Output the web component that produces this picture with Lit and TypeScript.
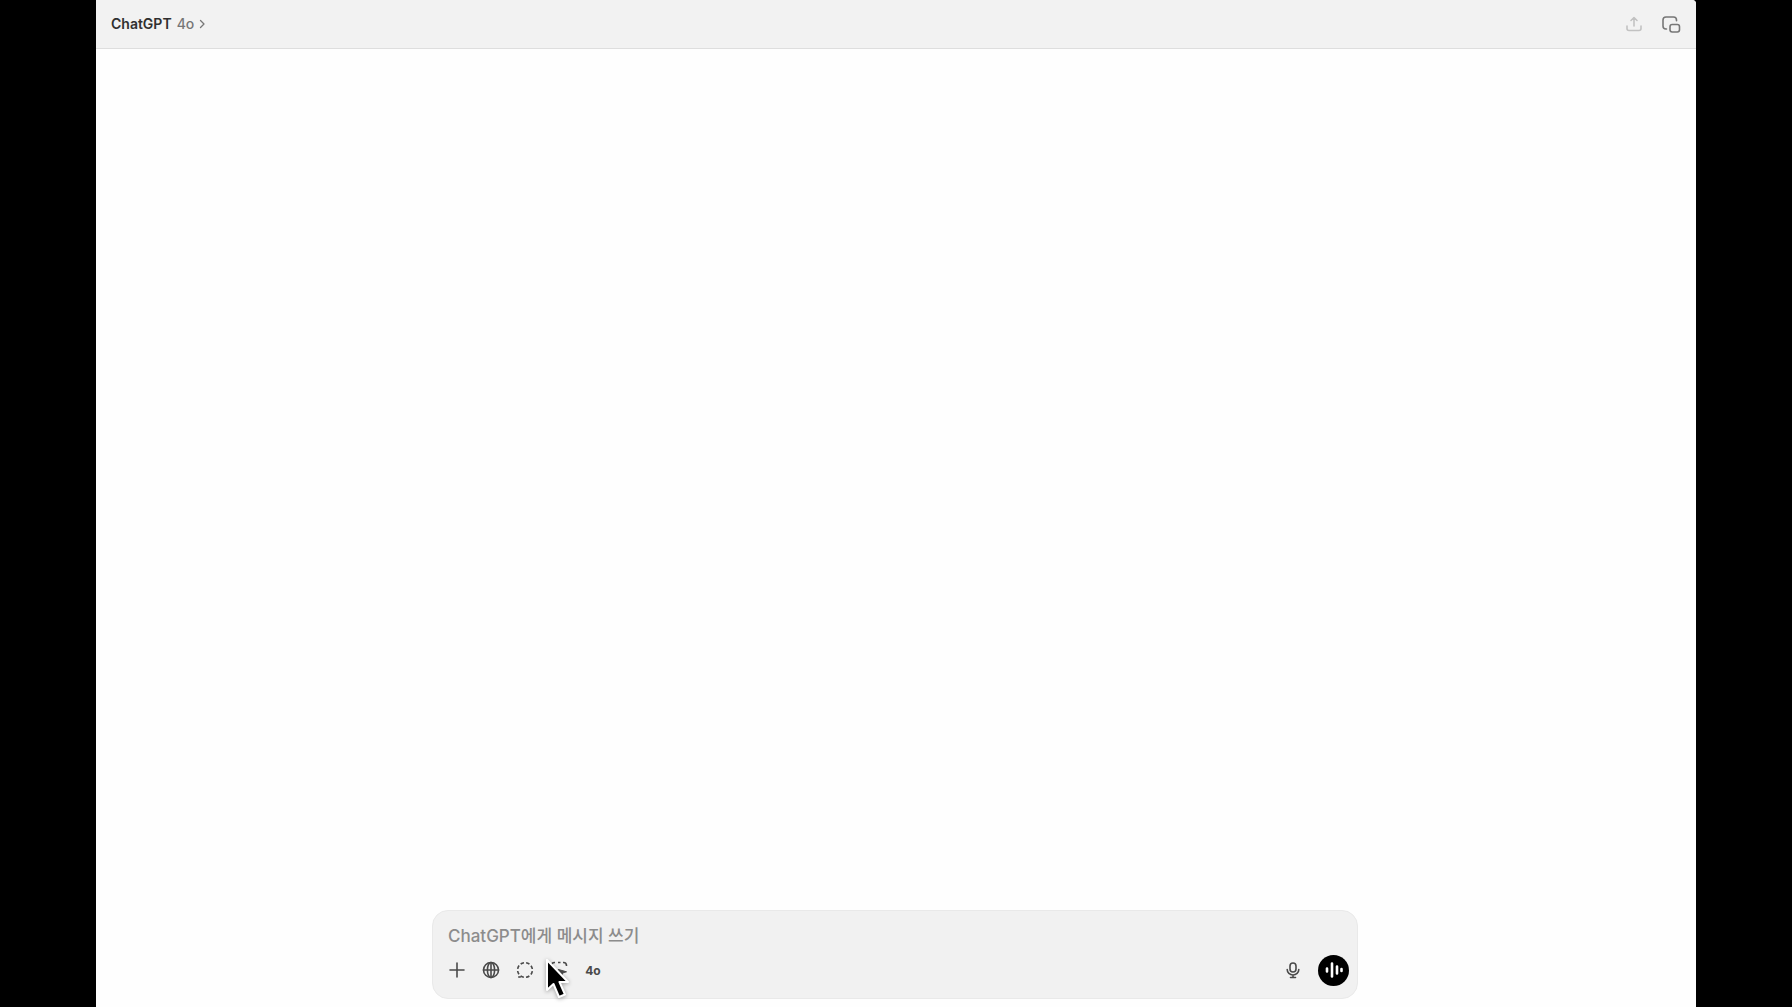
import { LitElement, html, css, svg } from "lit";
import { customElement, state } from "lit/decorators.js";

const icons = {
  chevron: svg`<path d="M1.5 1.5 5 5 1.5 8.5"/>`,
  share: svg`<path d="M8 10V1.5M5 4.5l3-3 3 3M1 10v2.500q0 2 2 2h10q2 0 2-2V10"/>`,
  pip: svg`<path d="M4.500 13H4a3 3 0 0 1-3-3V4a3 3 0 0 1 3-3h7.500a3 3 0 0 1 3 3v.8"/><rect x="8" y="8.500" width="9.500" height="7.500" rx="2.200"/>`,
  plus: svg`<path d="M9 2v14M2 9h14"/>`,
  globe: svg`<circle cx="9" cy="9" r="7.500"/><ellipse cx="9" cy="9" rx="3.600" ry="7.500"/><path d="M1.500 9h15M9 1.500v15"/>`,
  dashed: svg`<circle cx="9" cy="9" r="7.400" pathLength="80" stroke-dasharray="6.200 3.800" stroke-dashoffset="-2" stroke-linecap="butt"/><path d="M2.200 16h2.600" stroke-linecap="butt"/>`,
  scan: svg`<path d="M1.500 5v-.5q0-3 3-3H5M13 1.500h.5q3 0 3 3V5M1.500 13v.5q0 3 3 3H5M8 1.500h2.500" stroke-linecap="butt"/><path d="m8.500 8.500 8 2.300-3.500 1-1.500 3Z" fill="currentColor" stroke-width="1"/>`,
  mic: svg`<rect x="4" y="1" width="6" height="9" rx="3"/><path d="M1.200 7.500a5.800 5.500 0 0 0 11.600 0M7 13v2.500M4.500 15.500h5"/>`,
  wave: svg`<path d="M2 7.500v3M7 2.500v13M12 5.500v7M16.500 8v2"/>`,
};

@customElement("app-root")
export class AppRoot extends LitElement {
  @state() private draft = "";

  static styles = css`
    :host {
      display: flex;
      justify-content: center;
      min-height: 100vh;
      background: #000;
      font-family: Inter, "Noto Sans CJK KR", sans-serif;
    }
    .window {
      display: flex;
      flex-direction: column;
      width: 100%;
      margin: 0 96px;
      background: #fefefe;
      border-radius: 0 4px 0 0;
      overflow: hidden;
    }
    .bar {
      display: flex;
      align-items: center;
      justify-content: space-between;
      height: 49px;
      padding: 0 13px 0 15px;
      background: #f2f2f2;
      border-bottom: 1px solid #dedede;
      box-sizing: border-box;
    }
    button {
      display: flex;
      align-items: center;
      justify-content: center;
      padding: 0;
      border: 0;
      background: none;
      font: inherit;
      color: #4a4a4a;
    }
    svg {
      display: block;
      fill: none;
      stroke: currentColor;
      stroke-linecap: round;
      stroke-linejoin: round;
    }
    .title {
      gap: 5px;
      font-size: 14px;
      line-height: 20px;
      color: #777;
    }
    .name {
      font-weight: 600;
      color: #303030;
    }
    .version {
      font-weight: 500;
    }
    .actions {
      display: flex;
      gap: 13px;
    }
    .action {
      width: 24px;
      height: 24px;
      color: #777;
    }
    .action:disabled {
      color: #c2c2c2;
    }
    .thread {
      flex: 1;
    }
    .footer {
      display: flex;
      justify-content: center;
      padding: 0 18px 8px 16px;
    }
    .composer {
      position: relative;
      display: flex;
      flex-direction: column;
      gap: 6px;
      box-sizing: border-box;
      width: 100%;
      max-width: 926px;
      padding: 12px 8px 13px 12px;
      background: #f1f1f1;
      border: 1px solid #e9e9e9;
      border-radius: 16px;
    }
    .message {
      width: 100%;
      height: 26px;
      box-sizing: border-box;
      padding: 0 3px;
      border: 0;
      outline: 0;
      background: none;
      font: inherit;
      font-size: 17px;
      font-weight: 500;
      line-height: 26px;
      color: #222;
    }
    .message::placeholder {
      color: #8c8c8c;
      opacity: 1;
    }
    .tools {
      display: flex;
      align-items: center;
      gap: 10px;
      height: 30px;
    }
    .tool {
      width: 24px;
      height: 24px;
    }
    .model {
      font-size: 12px;
      font-weight: 700;
    }
    .spacer {
      flex: 1;
    }
    .voice {
      width: 31px;
      height: 31px;
      margin-left: 3px;
      border-radius: 50%;
      background: #000;
      color: #fff;
    }
    .pointer {
      position: absolute;
      left: 111px;
      top: 46px;
      pointer-events: none;
      filter: drop-shadow(0 1px 2px rgba(0, 0, 0, 0.35));
    }
  `;

  private icon(shape: unknown, width: number, height = width, stroke = 1.6) {
    return html`<svg
      width=${width}
      height=${height}
      viewBox="0 0 ${width} ${height}"
      stroke-width=${stroke}
      aria-hidden="true"
    >${shape}</svg>`;
  }

  private onInput(e: InputEvent) {
    this.draft = (e.target as HTMLInputElement).value;
  }

  render() {
    return html`
      <div class="window">
        <header class="bar">
          <button class="title" aria-haspopup="menu">
            <span class="name">ChatGPT</span>
            <span class="version">4o</span>
            ${this.icon(icons.chevron, 6, 10, 1.3)}
          </button>
          <div class="actions">
            <button class="action" aria-label="Share" disabled>${this.icon(icons.share, 16)}</button>
            <button class="action" aria-label="Companion window">${this.icon(icons.pip, 19, 17)}</button>
          </div>
        </header>
        <main class="thread"></main>
        <footer class="footer">
          <form class="composer" @submit=${(e: Event) => e.preventDefault()}>
            <input
              class="message"
              type="text"
              aria-label="ChatGPT에게 메시지 쓰기"
              placeholder="ChatGPT에게 메시지 쓰기"
              .value=${this.draft}
              @input=${this.onInput}
            />
            <div class="tools">
              <button type="button" class="tool" aria-label="Add">${this.icon(icons.plus, 18)}</button>
              <button type="button" class="tool" aria-label="Search">${this.icon(icons.globe, 18)}</button>
              <button type="button" class="tool" aria-label="Temporary chat">${this.icon(icons.dashed, 18)}</button>
              <button type="button" class="tool" aria-label="Work with apps">${this.icon(icons.scan, 18)}</button>
              <button type="button" class="tool model">4o</button>
              <span class="spacer"></span>
              <button type="button" class="tool" aria-label="Dictate">${this.icon(icons.mic, 14, 17)}</button>
              <button type="button" class="voice" aria-label="Voice mode">${this.icon(icons.wave, 18, 18, 2.6)}</button>
            </div>
            <svg class="pointer" width="26" height="44" viewBox="0 0 26 44" aria-hidden="true">
              <path d="M3 3v30l6.500-6 5.500 13 6-2.500-5.500-12.500H24Z" fill="#000" stroke="#fff" stroke-width="2" />
            </svg>
          </form>
        </footer>
      </div>
    `;
  }
}
